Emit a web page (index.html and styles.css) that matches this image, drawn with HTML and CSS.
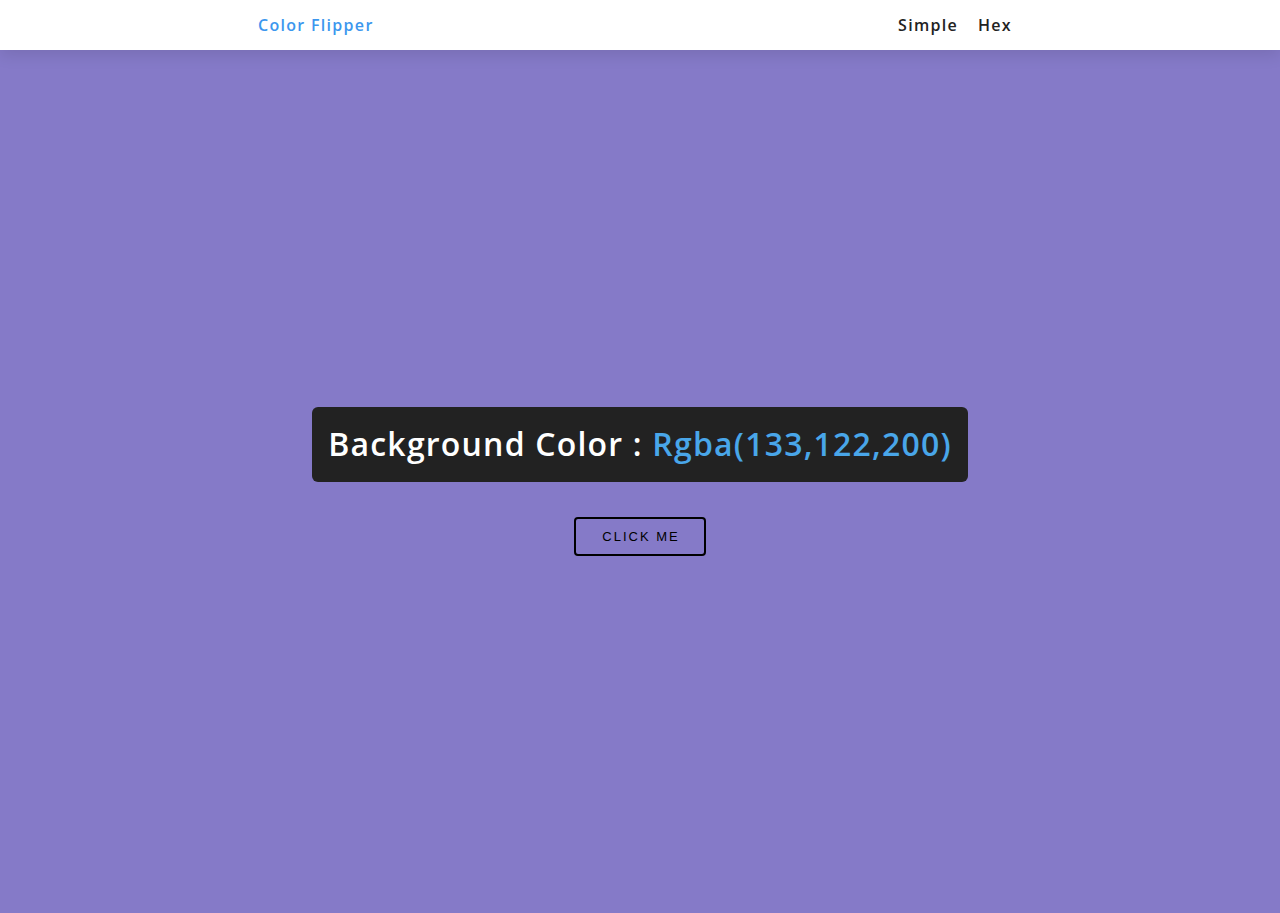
FILE: index.html
```html
<!DOCTYPE html>
<html lang="en">
<head>
<meta charset="UTF-8">
<title>Color Flipper</title>
<link rel="stylesheet" href="styles.css">
</head>
<body>
<nav class="navbar">
  <div class="nav-center">
    <h4 class="brand">Color Flipper</h4>
    <ul class="nav-links">
      <li><a href="#" class="nav-link">Simple</a></li>
      <li><a href="#" class="nav-link">Hex</a></li>
    </ul>
  </div>
</nav>
<main class="main">
  <div class="container">
    <h2 class="banner">Background Color : <span class="color">Rgba(133,122,200)</span></h2>
    <button class="btn" type="button">click me</button>
  </div>
</main>
</body>
</html>
```

FILE: styles.css
```css
* { box-sizing: border-box; margin: 0; padding: 0; }
html, body { height: 100%; }
body {
  font-family: "Open Sans", "Liberation Sans", sans-serif;
  background: rgb(133, 122, 200);
  color: #222;
}
.navbar {
  height: 50px;
  background: #fff;
  box-shadow: 0 5px 15px rgba(0, 0, 0, 0.1);
  position: relative;
  z-index: 1;
}
.nav-center {
  width: 764px;
  margin-left: 258px;
  height: 50px;
  display: flex;
  align-items: center;
  justify-content: space-between;
}
.brand {
  font-size: 16px;
  font-weight: 600;
  letter-spacing: 1.3px;
  color: #3c97ee;
}
.nav-links {
  list-style: none;
  display: flex;
}
.nav-link {
  display: block;
  padding: 0 10px;
  font-size: 16px;
  font-weight: 600;
  letter-spacing: 1.3px;
  color: #222;
  text-decoration: none;
}
.main {
  min-height: calc(100vh - 50px);
  display: flex;
  align-items: center;
  justify-content: center;
}
.container {
  display: flex;
  flex-direction: column;
  align-items: center;
  gap: 35px;
}
.banner {
  background: #222;
  color: #fff;
  font-size: 32px;
  font-weight: 600;
  letter-spacing: 1.2px;
  line-height: 1.5;
  padding: 13px 16px 14px;
  border-radius: 6px;
}
.color { color: #49a6e9; }
.btn {
  font-family: "Liberation Sans", Arial, sans-serif;
  background: transparent;
  border: 2px solid #000;
  border-radius: 4px;
  padding: 0 0 0 2px;
  height: 39px;
  width: 132px;
  font-size: 13px;
  letter-spacing: 2px;
  white-space: nowrap;
  text-transform: uppercase;
  color: #000;
  cursor: pointer;
}
```
